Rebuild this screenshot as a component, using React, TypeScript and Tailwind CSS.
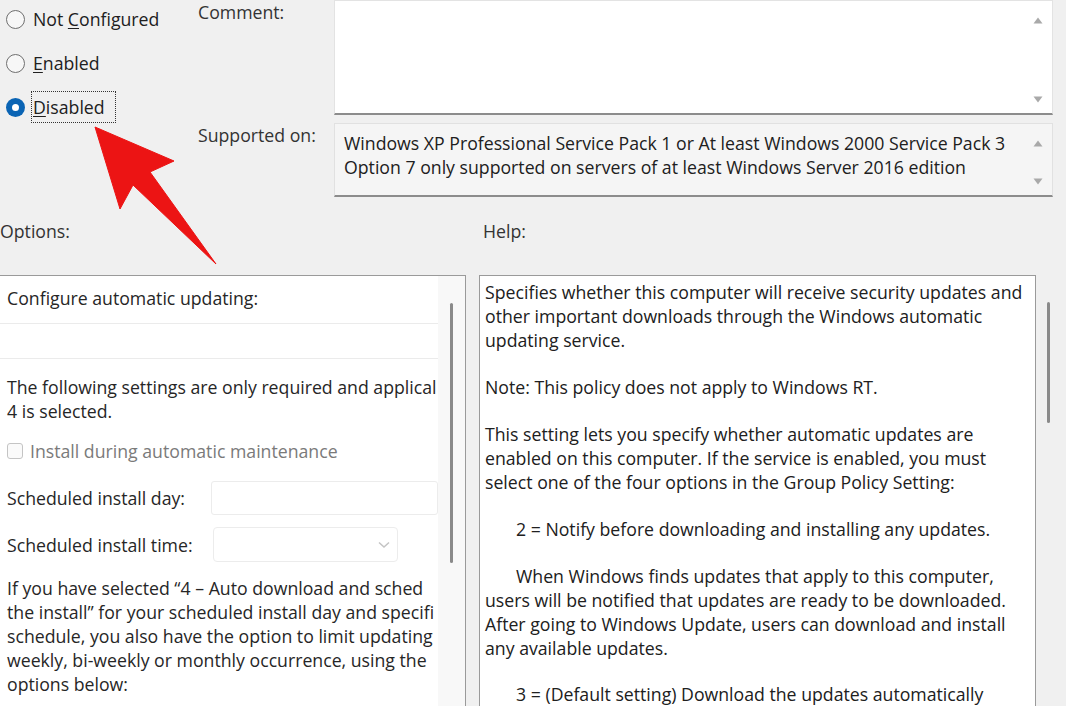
import React from 'react';

const UpDown: React.FC<{ top: number; bottom: number }> = ({ top, bottom }) => (
  <>
    <svg className="absolute right-[9px]" style={{ top: top - 4 }} width="10" height="7" viewBox="0 0 10 7">
      <path d="M5 0.5 L9.5 6.5 L0.5 6.5 Z" fill="#a9a9a9" />
    </svg>
    <svg className="absolute right-[9px]" style={{ top: bottom - 3 }} width="10" height="7" viewBox="0 0 10 7">
      <path d="M0.5 0.5 L9.5 0.5 L5 6.5 Z" fill="#a9a9a9" />
    </svg>
  </>
);

const Radio: React.FC<{ checked?: boolean; children: React.ReactNode; focus?: boolean }> = ({ checked, children, focus }) => (
  <div className="flex h-[32px] items-center">
    {checked ? (
      <span className="flex h-[19px] w-[19px] items-center justify-center rounded-full bg-[#0a64b4]">
        <span className="h-[7px] w-[7px] rounded-full bg-white" />
      </span>
    ) : (
      <span className="h-[19px] w-[19px] rounded-full border border-[#6f6f6f] bg-[#f7f7f7]" />
    )}
    <span
      className={
        focus
          ? 'ml-[6px] flex h-[32px] items-center border border-dotted border-[#333] pl-[1px] pr-[10px]'
          : 'ml-[8px]'
      }
    >
      {children}
    </span>
  </div>
);

const App: React.FC = () => {
  return (
    <div className="relative h-[706px] w-[1066px] overflow-hidden bg-[#f0f0f0] font-['Open_Sans',sans-serif] text-[17.7px] leading-[24px] text-[#202020]">
      {/* Top: state radios, comment, supported on */}
      <div className="flex">
        <div className="flex w-[198px] shrink-0 flex-col gap-[12px] pl-[6px] pt-[3px]">
          <Radio>
            Not <u className="underline-offset-2">C</u>onfigured
          </Radio>
          <Radio>
            <u className="underline-offset-2">E</u>nabled
          </Radio>
          <Radio checked focus>
            <u className="underline-offset-2">D</u>isabled
          </Radio>
        </div>

        <div className="flex flex-col">
          <div className="flex">
            <div className="w-[136px] shrink-0 text-[#333]">Comment:</div>
            <div className="relative h-[115px] w-[719px] border border-b-2 border-[#e3e3e3] border-b-[#8c8c8c] bg-white">
              <UpDown top={20} bottom={98} />
            </div>
          </div>
          <div className="mt-[8px] flex">
            <div className="w-[136px] shrink-0 text-[#333]">Supported on:</div>
            <div className="relative h-[74px] w-[719px] border border-b-2 border-[#e1e1e1] border-b-[#8c8c8c] bg-[#f5f5f5] pl-[9px] pt-[7px]">
              <div>Windows XP Professional Service Pack 1 or At least Windows 2000 Service Pack 3</div>
              <div>Option 7 only supported on servers of at least Windows Server 2016 edition</div>
              <UpDown top={20} bottom={57} />
            </div>
          </div>
        </div>
      </div>

      {/* Section labels */}
      <div className="mt-[22px] flex text-[#333]">
        <div className="w-[483px]">Options:</div>
        <div>Help:</div>
      </div>

      {/* Panels */}
      <div className="mt-[32px] flex items-start">
        {/* Options panel */}
        <div className="ml-[-2px] flex h-[440px] w-[468px] shrink-0 border border-[#9a9a9a] bg-white">
          <div className="w-[439px] overflow-hidden whitespace-nowrap pt-[10px] text-[#262626]">
            <div className="pl-[8px]">Configure automatic updating:</div>
            <div className="mt-[13px] h-[36px] border-y border-[#ebebeb]" />
            <div className="mt-[16px] pl-[8px]">
              <div>The following settings are only required and applical</div>
              <div>4 is selected.</div>
            </div>
            <div className="mt-[16px] flex items-center pl-[8px] text-[#7a7a7a]">
              <span className="h-[16px] w-[16px] rounded-[3px] border border-[#c4c4c4] bg-[#fafafa]" />
              <span className="ml-[7px]">Install during automatic maintenance</span>
            </div>
            <div className="mt-[18px] flex h-[34px] items-center">
              <span className="w-[212px] shrink-0 pl-[8px]">Scheduled install day:</span>
              <span className="h-[34px] flex-1 rounded-[3px] border border-[#ececec] bg-white" />
            </div>
            <div className="mt-[12px] flex h-[35px] items-center">
              <span className="w-[214px] shrink-0 pl-[8px]">Scheduled install time:</span>
              <span className="flex h-[35px] w-[185px] items-center justify-end rounded-[4px] border border-[#ececec] bg-white pr-[7px]">
                <svg width="12" height="8" viewBox="0 0 12 8">
                  <path d="M1 1.5 L6 6 L11 1.5" fill="none" stroke="#c4c4c4" strokeWidth="1.5" />
                </svg>
              </span>
            </div>
            <div className="mt-[14px] pl-[8px]">
              <div>If you have selected “4 – Auto download and sched</div>
              <div>the install” for your scheduled install day and specifi</div>
              <div>schedule, you also have the option to limit updating</div>
              <div>weekly, bi-weekly or monthly occurrence, using the</div>
              <div>options below:</div>
            </div>
          </div>
          <div className="flex flex-1 justify-center bg-[#f8f8f8] pt-[27px]">
            <div className="h-[260px] w-[3px] rounded-full bg-[#8a8a8a]" />
          </div>
        </div>

        {/* Help panel */}
        <div className="ml-[13px] h-[440px] w-[557px] shrink-0 border border-[#9a9a9a] bg-white pl-[5px] pt-[4px] whitespace-nowrap">
          <div>Specifies whether this computer will receive security updates and</div>
          <div>other important downloads through the Windows automatic</div>
          <div>updating service.</div>
          <div className="mt-[23px]">Note: This policy does not apply to Windows RT.</div>
          <div className="mt-[23px]">This setting lets you specify whether automatic updates are</div>
          <div>enabled on this computer. If the service is enabled, you must</div>
          <div>select one of the four options in the Group Policy Setting:</div>
          <div className="mt-[23px] pl-[31px]">2 = Notify before downloading and installing any updates.</div>
          <div className="mt-[23px] pl-[31px]">When Windows finds updates that apply to this computer,</div>
          <div>users will be notified that updates are ready to be downloaded.</div>
          <div>After going to Windows Update, users can download and install</div>
          <div>any available updates.</div>
          <div className="mt-[22px] pl-[31px]">3 = (Default setting) Download the updates automatically</div>
        </div>

        <div className="ml-[11px] mt-[27px] h-[121px] w-[3px] rounded-full bg-[#8a8a8a]" />
      </div>

      {/* Red annotation arrow */}
      <svg className="pointer-events-none absolute left-0 top-0" width="1066" height="706">
        <polygon
          points="95,127 174,161 150,172 216,264 133,185 120,209"
          fill="#ec1414"
          stroke="#ec1414"
          strokeWidth="1"
          strokeLinejoin="round"
        />
      </svg>
    </div>
  );
};

export default App;
